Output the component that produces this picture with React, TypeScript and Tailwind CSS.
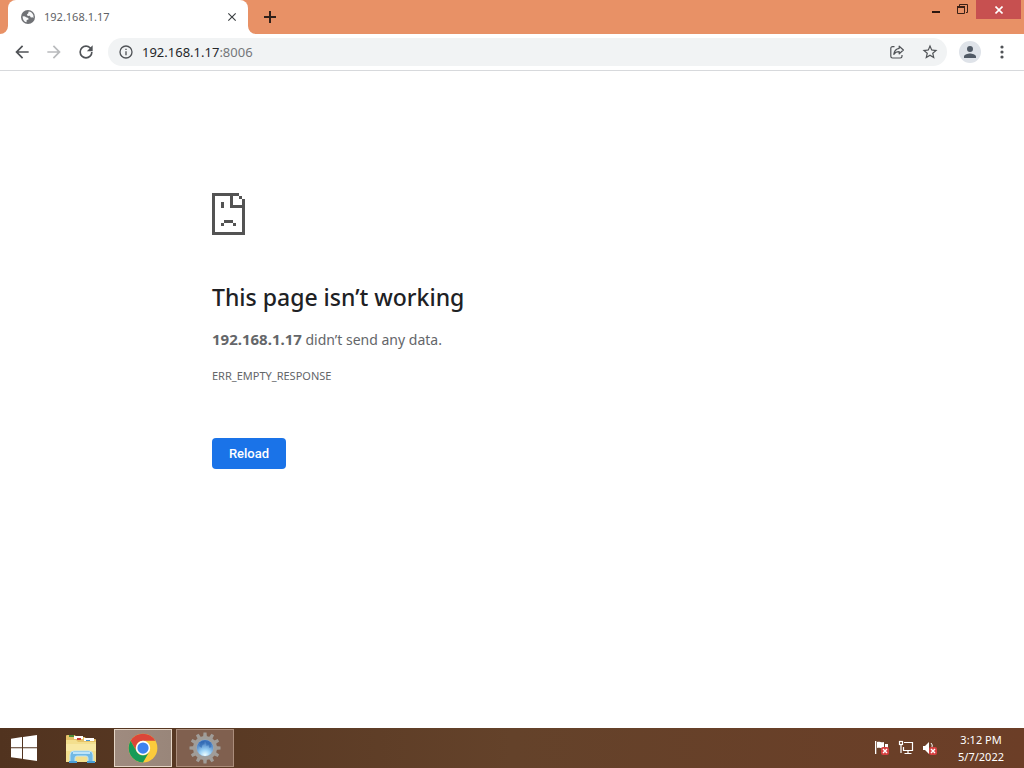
import type { ReactNode } from "react";

function Icon({ d, className }: { d: string; className: string }) {
  return (
    <svg viewBox="0 0 24 24" className={className} fill="currentColor" aria-hidden="true">
      <path d={d} />
    </svg>
  );
}

const BACK = "M20 11H7.83l5.59-5.59L12 4l-8 8 8 8 1.41-1.41L7.83 13H20v-2z";
const FORWARD = "M12 4l-1.41 1.41L16.17 11H4v2h12.17l-5.58 5.59L12 20l8-8z";
const REFRESH =
  "M17.65 6.35A7.958 7.958 0 0012 4a8 8 0 108 8h-2a6 6 0 11-6-6c1.66 0 3.14.69 4.22 1.78L13 11h7V4l-2.35 2.35z";
const INFO =
  "M11 7h2v2h-2zm0 4h2v6h-2zm1-9a10 10 0 100 20 10 10 0 000-20zm0 18a8 8 0 110-16 8 8 0 010 16z";
const STAR =
  "M22 9.24l-7.19-.62L12 2 9.19 8.63 2 9.24l5.46 4.73L5.82 21 12 17.27 18.18 21l-1.63-7.03L22 9.24zM12 15.4l-3.76 2.27 1-4.28-3.32-2.88 4.38-.38L12 6.1l1.71 4.04 4.38.38-3.32 2.88 1 4.28L12 15.4z";
const PERSON = "M12 12a4 4 0 100-8 4 4 0 000 8zm0 2c-2.67 0-8 1.34-8 4v2h16v-2c0-2.66-5.33-4-8-4z";
const CLOSE =
  "M19 6.41L17.59 5 12 10.59 6.41 5 5 6.41 10.59 12 5 17.59 6.41 19 12 13.41 17.59 19 19 17.59 13.41 12z";

function Globe() {
  return (
    <svg viewBox="0 0 16 16" className="size-4 shrink-0" aria-hidden="true">
      <circle cx="8" cy="8" r="7" fill="#707276" />
      <path d="M2.500 7.500Q5 6.800 6 8.300l1.700.4q1.300.5.8 1.700L6.700 11l-.2 2.300Q3 12.500 2.500 7.500z" fill="#f8f9fa" />
      <path d="M8.600 2.600Q12 2.900 13.400 6.300l.1 2.600q-.8-.7-1.600-.5l-1.400-.1-.5-1.500-2.300.1-.8-1.300L8.300 4.300z" fill="#f8f9fa" />
    </svg>
  );
}

function TabStrip() {
  return (
    <header className="flex h-[34px] shrink-0 items-stretch bg-[#e89166] pl-2">
      <div className="relative flex w-60 items-center rounded-t-lg bg-white pr-2 pl-3">
        <svg viewBox="0 0 8 8" className="absolute bottom-0 -left-2 size-2" aria-hidden="true">
          <path d="M8 0v8H0a8 8 0 008-8z" fill="#fff" />
        </svg>
        <svg viewBox="0 0 8 8" className="absolute -right-2 bottom-0 size-2" aria-hidden="true">
          <path d="M0 0v8h8a8 8 0 01-8-8z" fill="#fff" />
        </svg>
        <Globe />
        <span className="ml-2 flex-1 text-[11px] leading-4 text-[#5f6266]">192.168.1.17</span>
        <button aria-label="Close tab" className="flex size-4 items-center justify-center text-[#3c4043]">
          <Icon d={CLOSE} className="size-[14px]" />
        </button>
      </div>
      <button aria-label="New tab" className="ml-[14px] flex w-4 items-center justify-center">
        <svg viewBox="0 0 12 12" className="size-3" fill="none" stroke="#30201a" strokeWidth="2">
          <path d="M6 0v12M0 6h12" />
        </svg>
      </button>
      <div className="ml-auto flex items-start pr-[3px]">
        <button aria-label="Minimize" className="flex h-[19px] w-7 items-center justify-center">
          <svg viewBox="0 0 10 12" className="h-3 w-[10px]">
            <path d="M1 7h8v2H1z" fill="#2b1710" />
          </svg>
        </button>
        <button aria-label="Restore" className="flex h-[19px] w-6 items-center justify-center">
          <svg viewBox="0 0 11 11" className="size-[11px]" fill="none" stroke="#3b2116">
            <path d="M2.500 2V.5h8v8H9M.5 3.500h7v6h-7z" />
            <path d="M0 3h8" strokeWidth="2" />
          </svg>
        </button>
        <button aria-label="Close" className="ml-[2px] flex h-[19px] w-[45px] items-center justify-center bg-[#c75050]">
          <svg viewBox="0 0 8 8" className="size-2" fill="none" stroke="#fff" strokeWidth="1.600">
            <path d="M.5.5l7 7M7.500.5l-7 7" />
          </svg>
        </button>
      </div>
    </header>
  );
}

function Toolbar() {
  return (
    <nav className="flex h-[37px] shrink-0 items-center border-b border-[#d7d9dc] bg-white pr-[14px] pl-3 text-[#505357]">
      <div className="flex gap-3">
        <button aria-label="Back">
          <Icon d={BACK} className="size-5" />
        </button>
        <button aria-label="Forward" className="text-[#b9bbbd]">
          <Icon d={FORWARD} className="size-5" />
        </button>
        <button aria-label="Reload this page">
          <Icon d={REFRESH} className="size-5" />
        </button>
      </div>
      <div className="ml-3 flex h-7 flex-1 items-center rounded-full bg-[#f1f3f4] pr-2 pl-[10px]">
        <button aria-label="View site information">
          <Icon d={INFO} className="size-4" />
        </button>
        <div
          role="textbox"
          aria-label="Address"
          className="ml-2 flex-1 text-[13px] leading-5 text-[#74777a]"
        >
          <span className="text-[#25272a]">192.168.1.17</span>:8006
        </div>
        <button aria-label="Share this page" className="mr-4">
          <svg viewBox="0 0 16 16" className="size-4" fill="none" stroke="currentColor" strokeWidth="1.200" strokeLinejoin="round">
            <path d="M5.500 2.700H3.500A1.700 1.700 0 001.800 4.400v7.900A1.700 1.700 0 003.500 14h7.800a1.700 1.700 0 001.700-1.700V11" />
            <path d="M10.200 2.200 14.400 6l-4.200 3.800V7.700c-2.600 0-4.200.8-5.400 2.600.4-3.200 2.200-5.500 5.400-6z" />
          </svg>
        </button>
        <button aria-label="Bookmark this page">
          <Icon d={STAR} className="size-[18px]" />
        </button>
      </div>
      <button
        aria-label="Profile"
        className="ml-3 flex size-[22px] items-center justify-center rounded-full bg-[#dfe3e9] text-[#515a66]"
      >
        <Icon d={PERSON} className="size-[18px]" />
      </button>
      <button aria-label="Menu" className="ml-[13px] flex w-4 justify-center">
        <svg viewBox="0 0 4 14" className="h-[14px] w-1" fill="currentColor">
          <circle cx="2" cy="2" r="1.600" />
          <circle cx="2" cy="7" r="1.600" />
          <circle cx="2" cy="12" r="1.600" />
        </svg>
      </button>
    </nav>
  );
}

function SadPage() {
  return (
    <svg viewBox="0 0 11 14" className="h-[42px] w-[33px]" fill="#535353" shapeRendering="crispEdges" role="img" aria-label="Page error">
      <path d="M0 0h9v1H7v3h3V2h1v12H0zM1 1v12h9V5H6V1zM9 1h1v1H9zM3 3h1v2H3zM4 9h3v1H4zM3 10h1v1H3zM7 10h1v1H7z" fillRule="evenodd" />
    </svg>
  );
}

function ErrorPage() {
  return (
    <main className="flex-1 bg-white px-6 pt-[122px] text-[#646669]">
      <div className="mx-auto max-w-[600px]">
        <SadPage />
        <h1 className="mt-12 text-[23px] leading-7 font-medium text-[#202124]">This page isn’t working</h1>
        <p className="mt-[18px] text-[14px] leading-5">
          <strong className="text-[15px] font-bold">192.168.1.17</strong> didn’t send any data.
        </p>
        <p className="mt-4 text-[11px] leading-5">ERR_EMPTY_RESPONSE</p>
        <button className="mt-[52px] h-[31px] min-w-[74px] rounded bg-[#1a73e8] px-4 font-[Roboto,sans-serif] text-[13px] font-medium text-white">
          Reload
        </button>
      </div>
    </main>
  );
}

function WindowsLogo() {
  return (
    <svg viewBox="0 0 26 26" className="size-[26px]" fill="#fff" aria-hidden="true">
      <path d="M0 3.700 11 2v10.300H0zM12 1.900 26 0v12.300H12zM0 13.300h11v10.500L0 22.300zM12 13.300h14V26l-14-2.100z" />
    </svg>
  );
}

function FolderIcon() {
  return (
    <svg viewBox="0 0 32 30" className="h-[30px] w-8" aria-hidden="true">
      <path d="M1 4V2q0-1 1-1h8l1 2h9l1 2h9q1 0 1 1v22H1z" fill="#e6c368" />
      <path d="M4 1h5v2H4z" fill="#4c8b3b" />
      <path d="M9 2h9v3H9z" fill="#fff" />
      <path d="M12 4h4v2h-4z" fill="#c74436" />
      <path d="M19 4h10v3H19z" fill="#fff" />
      <path d="M21 6h4v1h-4z" fill="#4493cf" />
      <path d="M1 6h10l2 2h18v20H1z" fill="#f3df8e" />
      <path d="M1 10h30v7H1z" fill="#f8e8a3" />
      <path d="M5 28v-7q0-4 4-4h15q4 0 4 4v7h-5v-4q0-2-2-2h-9q-2 0-2 2v4z" fill="#71b9e5" stroke="#c1e4f4" />
      <path d="M8 19h17" stroke="#d9f3ff" strokeWidth="1.500" />
      <path d="M4 28h8M22 28h8" stroke="#4a9fd7" strokeWidth="2" />
    </svg>
  );
}

function ChromeIcon() {
  return (
    <svg viewBox="0 0 48 48" className="size-[30px]" aria-hidden="true">
      <circle cx="24" cy="24" r="23" fill="#fbcb3c" />
      <path d="M4.100 12.500A23 23 0 0143.900 12.500H24a11.500 11.500 0 00-10 17.300z" fill="#db4639" />
      <path d="M4.100 12.500A23 23 0 0024 47l10-17.200a11.500 11.500 0 01-20 0z" fill="#169b58" />
      <circle cx="24" cy="24" r="11.500" fill="#fff" />
      <circle cx="24" cy="24" r="9" fill="#3e82ee" />
    </svg>
  );
}

const TEETH = [0, 30, 60, 90, 120, 150, 180, 210, 240, 270, 300, 330];

function GearIcon() {
  return (
    <svg viewBox="0 0 32 32" className="size-8" aria-hidden="true">
      <defs>
        <radialGradient id="orb" cx="50%" cy="95%" r="85%">
          <stop offset="0" stopColor="#f0ffff" />
          <stop offset="0.4" stopColor="#9bd2f6" />
          <stop offset="1" stopColor="#3a70ba" />
        </radialGradient>
      </defs>
      <g fill="#a09d99">
        {TEETH.map((angle) => (
          <path key={angle} d="M14 6l.5-5.500h3L18 6z" transform={`rotate(${angle} 16 16)`} />
        ))}
        <circle cx="16" cy="16" r="12" />
      </g>
      <circle cx="16" cy="16" r="8.500" fill="#8eacc8" />
      <circle cx="16" cy="16" r="8" fill="url(#orb)" />
      <path d="M10 14l2-4 3-1 .5 3-2 1-1 3zM17 10l4 1 1.500 4-2 1-1-3-2 1z" fill="#2862ad" opacity=".55" />
    </svg>
  );
}

function RedCross({ x, y }: { x: number; y: number }) {
  return (
    <g transform={`translate(${x} ${y})`}>
      <rect width="8" height="8" rx="2" fill="#d64040" />
      <path d="M2 2l4 4M6 2 2 6" stroke="#fff" strokeWidth="1.400" />
    </g>
  );
}

function TaskButton({ label, className, children }: { label: string; className: string; children: ReactNode }) {
  return (
    <button aria-label={label} className={`flex items-center justify-center ${className}`}>
      {children}
    </button>
  );
}

function Taskbar() {
  return (
    <footer className="flex h-10 shrink-0 items-stretch bg-linear-to-r from-[#51331f] via-[#64422a] to-[#6c3e27] py-px text-white">
      <TaskButton label="Start" className="w-12">
        <WindowsLogo />
      </TaskButton>
      <TaskButton label="File Explorer" className="ml-1 w-[58px] pt-[2px]">
        <FolderIcon />
      </TaskButton>
      <TaskButton label="Google Chrome" className="ml-1 w-[58px] border border-[#e5d5c6] bg-linear-to-r from-[#9f8b7f] to-[#99867a]">
        <ChromeIcon />
      </TaskButton>
      <TaskButton label="Settings" className="ml-1 w-[58px] border border-[#ab8d7b] bg-[#80604f]">
        <GearIcon />
      </TaskButton>
      <div className="ml-auto flex items-center gap-2 pr-5">
        <button aria-label="Action Center">
          <svg viewBox="0 0 16 16" className="size-4">
            <path d="M1 1h1.300v13H1zM3 2c3-1 4 1 7 0v6C7 9 6 7 3 8z" fill="#fff" />
            <path d="M11 4h3v4h-3z" fill="#fff" />
            <RedCross x={7} y={7} />
          </svg>
        </button>
        <button aria-label="Network">
          <svg viewBox="0 0 16 16" className="size-4" fill="none" stroke="#fff" strokeWidth="1.200">
            <path d="M6 2.500h8.500v8H5.500V7M10 10.500v3M6.500 13.500h7" />
            <rect x="1.500" y="1.500" width="3" height="3" />
            <path d="M3 5v8" />
          </svg>
        </button>
        <button aria-label="Volume muted">
          <svg viewBox="0 0 16 16" className="size-4">
            <path d="M1 6h2l4-4v12l-4-4H1z" fill="#fff" />
            <path d="M9 3q2 2 1 4" stroke="#fff" fill="none" />
            <RedCross x={7} y={7} />
          </svg>
        </button>
        <time dateTime="2022-05-07T15:12" className="ml-3 text-center text-[11px] leading-[17px]">
          <span className="block">3:12 PM</span>
          <span className="block">5/7/2022</span>
        </time>
      </div>
    </footer>
  );
}

export default function App() {
  return (
    <div className="flex min-h-screen flex-col bg-white font-['Noto_Sans','Open_Sans',sans-serif]">
      <TabStrip />
      <Toolbar />
      <ErrorPage />
      <Taskbar />
    </div>
  );
}
